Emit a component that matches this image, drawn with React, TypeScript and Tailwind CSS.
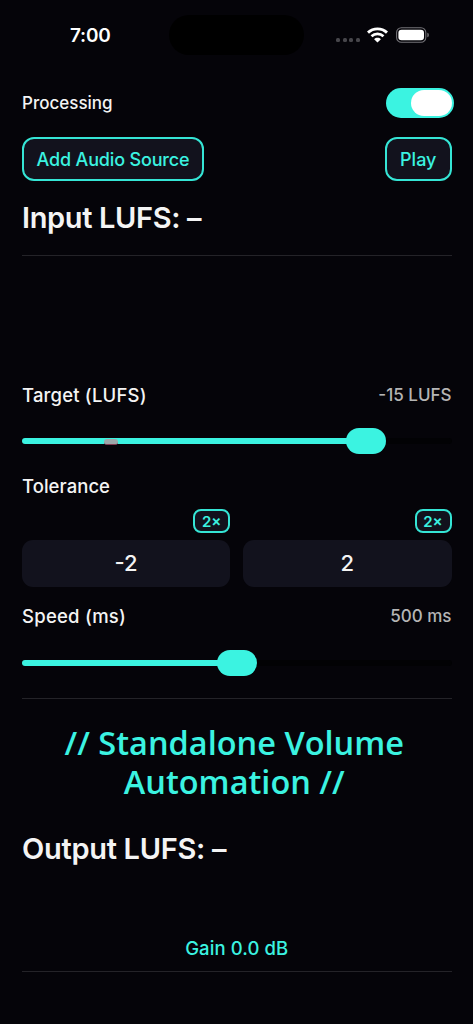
import React from 'react';

function StatusBar() {
  return (
    <div className="flex h-[88px] items-start pt-[15px]">
      <div className="flex h-10 w-[169px] items-center pt-[2px] pl-[70px] text-[19px] font-semibold tracking-[-0.2px] text-white">7:00</div>
      <div className="h-10 w-[135px] rounded-full bg-black" />
      <div className="flex h-10 items-center pl-[32px]">
        <div className="mt-[10px] flex gap-[2.5px]">
          {[0, 1, 2, 3].map((i) => <span key={i} className="size-1 rounded-[1.5px] bg-[#47464b]" />)}
        </div>
        <svg className="ml-[7px]" width="21" height="16" viewBox="0 0 21 16" fill="none">
          <path d="M1 5.6C6.3.6 14.7.6 20 5.6" stroke="#fff" strokeWidth="2.9" />
          <path d="M4.5 9.3c3.4-3.2 8.6-3.2 12 0" stroke="#fff" strokeWidth="2.7" />
          <path d="M7.1 12.2c1.9-1.8 4.9-1.8 6.8 0L10.5 15.6Z" fill="#fff" />
        </svg>
        <svg className="ml-2" width="34" height="16" viewBox="0 0 34 16" fill="none">
          <rect x=".6" y=".8" width="29.2" height="14.4" rx="4.8" stroke="#737277" strokeWidth="1.1" />
          <rect x="2.4" y="2.7" width="25.6" height="10.6" rx="3.2" fill="#fff" />
          <path d="M31.3 5.7c2.1.5 2.1 4.1 0 4.6Z" fill="#737277" />
        </svg>
      </div>
    </div>
  );
}

function Slider({ value, mark }: { value: number; mark?: boolean }) {
  return (
    <div className="relative flex h-[26px] items-center">
      <div className="h-[6.5px] w-full rounded-full bg-[#020204]">
        <div className="h-full rounded-full bg-[#3bf3e1]" style={{ width: `${value}%` }} />
      </div>
      {mark && <div className="absolute top-[11px] left-[82px] h-[6px] w-[14px] rounded-[3px] border-b border-[#813a50] bg-[#9da8aa]" />}
      <div className="absolute top-0 h-[26px] w-10 -translate-x-1/2 rounded-full bg-[#3bf3e1]" style={{ left: `${value}%` }} />
    </div>
  );
}

function ToleranceField({ value }: { value: string }) {
  return (
    <div className="flex flex-1 flex-col items-end gap-[7px]">
      <button className="h-[24px] w-[37px] rounded-lg border-2 border-[#35e5d5] bg-[#12121d] text-[15px] leading-none font-semibold text-[#3bf3e1]">2×</button>
      <div className="flex h-[47px] w-full items-center justify-center rounded-[11px] bg-[#12121d] text-[22px] font-medium">{value}</div>
    </div>
  );
}

export default function App() {
  return (
    <div className="flex h-[1024px] w-[473px] flex-col overflow-hidden bg-[#050409] font-['Inter',sans-serif] text-[#f4f4f4]">
      <StatusBar />
      <main className="flex flex-col pr-[21.5px] pl-[22px]">
        <div className="flex h-[30px] items-center justify-between">
          <span className="pt-[2px] text-[17px] font-medium">Processing</span>
          <div className="-mr-[2px] flex h-[30px] w-[68px] items-center justify-end rounded-full bg-[#3bf3e1] pr-[2px]">
            <div className="h-[26px] w-[41px] rounded-full bg-white" />
          </div>
        </div>

        <div className="mt-[19px] flex h-11 justify-between text-[18px] font-medium text-[#3bf3e1]">
          <button className="w-[182px] rounded-xl border-2 border-[#35e5d5] bg-[#12121d] tracking-[-0.17px]">Add Audio Source</button>
          <button className="w-[66.5px] rounded-xl border-2 border-[#35e5d5] bg-[#12121d]">Play</button>
        </div>

        <h2 className="mt-[17px] h-10 text-[29px] leading-10 font-semibold tracking-[-0.36px]">Input LUFS: –</h2>
        <div className="mt-[17px] h-px bg-[#242328]" />

        <div className="mt-[126px] flex h-7 items-center justify-between">
          <span className="text-[18.5px] font-medium tracking-[0.18px]">Target (LUFS)</span>
          <span className="text-[17px] font-medium text-[#b5b5b5]">-15 LUFS</span>
        </div>
        <div className="mt-[18px]">
          <Slider value={80} mark />
        </div>

        <div className="mt-[19px] flex h-7 items-center text-[18.5px] font-medium tracking-[0.05px]">Tolerance</div>
        <div className="mt-[8px] flex gap-[13px]">
          <ToleranceField value="-2" />
          <ToleranceField value="2" />
        </div>

        <div className="mt-[16px] flex h-7 items-center justify-between">
          <span className="text-[18.5px] font-medium tracking-[0.25px]">Speed (ms)</span>
          <span className="text-[17px] font-medium text-[#b5b5b5]">500 ms</span>
        </div>
        <div className="mt-[19px]">
          <Slider value={50} />
        </div>
        <div className="mt-[22px] h-px bg-[#242328]" />

        <h1 className="mt-[24px] pr-[5px] text-center font-['Open_Sans',sans-serif] text-[32.5px] leading-[39px] font-semibold text-[#3bf3e1]">
          // Standalone Volume<br />Automation //
        </h1>

        <h2 className="mt-[28px] h-10 text-[29px] leading-10 font-semibold tracking-[-0.3px]">Output LUFS: –</h2>
        <div className="mt-[66px] flex h-7 items-center justify-center text-[18.5px] font-medium tracking-[0.1px] text-[#3bf3e1]">Gain 0.0 dB</div>
        <div className="mt-[8px] h-px bg-[#242328]" />
      </main>
    </div>
  );
}
